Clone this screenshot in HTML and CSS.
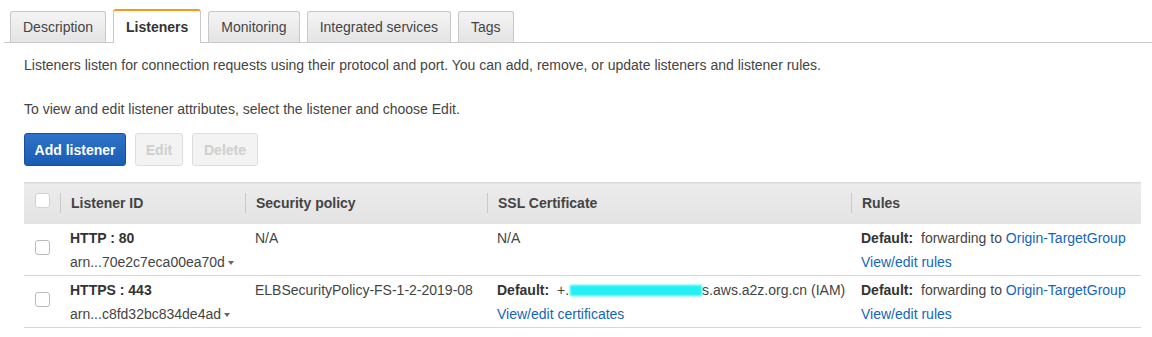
FILE: index.html
```html
<!DOCTYPE html>
<html>
<head>
<meta charset="utf-8">
<link rel="stylesheet" href="styles.css">
</head>
<body>
<div class="tabs">
  <div class="tab">Description</div>
  <div class="tab active">Listeners</div>
  <div class="tab">Monitoring</div>
  <div class="tab">Integrated services</div>
  <div class="tab">Tags</div>
</div>
<div class="content">
  <p class="intro">Listeners listen for connection requests using their protocol and port. You can add, remove, or update listeners and listener rules.</p>
  <p class="hint">To view and edit listener attributes, select the listener and choose Edit.</p>
  <div class="actions">
    <button class="btn primary">Add listener</button>
    <button class="btn disabled">Edit</button>
    <button class="btn disabled">Delete</button>
  </div>
  <table class="grid">
    <colgroup>
      <col class="c-check"><col class="c-id"><col class="c-policy"><col class="c-ssl"><col class="c-rules">
    </colgroup>
    <thead>
      <tr>
        <th class="check"><span class="box"></span></th>
        <th class="sep">Listener ID</th>
        <th class="sep">Security policy</th>
        <th class="sep">SSL Certificate</th>
        <th class="sep">Rules</th>
      </tr>
    </thead>
    <tbody>
      <tr>
        <td class="check"><span class="box"></span></td>
        <td><div class="line strong">HTTP : 80</div><div class="line second">arn...70e2c7eca00ea70d <span class="caret"></span></div></td>
        <td><div class="line">N/A</div></td>
        <td><div class="line">N/A</div></td>
        <td><div class="line"><span class="label">Default:</span> forwarding to <a class="link">Origin-TargetGroup</a></div><div class="line second"><a class="link">View/edit rules</a></div></td>
      </tr>
      <tr>
        <td class="check"><span class="box"></span></td>
        <td><div class="line strong">HTTPS : 443</div><div class="line second">arn...c8fd32bc834de4ad <span class="caret"></span></div></td>
        <td><div class="line">ELBSecurityPolicy-FS-1-2-2019-08</div></td>
        <td><div class="line"><span class="label">Default:</span> +.<span class="redact"></span>s.aws.a2z.org.cn (IAM)</div><div class="line second"><a class="link">View/edit certificates</a></div></td>
        <td><div class="line"><span class="label">Default:</span> forwarding to <a class="link">Origin-TargetGroup</a></div><div class="line second"><a class="link">View/edit rules</a></div></td>
      </tr>
    </tbody>
  </table>
</div>
</body>
</html>
```
FILE: styles.css
```css
* { box-sizing: border-box; }
body {
  margin: 0;
  background: #fff;
  font-family: "Liberation Sans", Arial, Helvetica, sans-serif;
  font-size: 14px;
  color: #444;
}
.tabs {
  display: flex;
  align-items: flex-end;
  gap: 7px;
  margin-left: 4px;
  padding: 9px 0 0 6px;
  border-bottom: 1px solid #c9c9c9;
}
.tab {
  height: 31px;
  padding: 0 12px;
  display: flex;
  align-items: center;
  font-size: 14px;
  color: #444;
  background: linear-gradient(#f4f4f4, #e4e4e4);
  border: 1px solid #c8c8c8;
  border-bottom: none;
  border-radius: 3px 3px 0 0;
}
.tab.active {
  height: 34px;
  margin-bottom: -1px;
  background: #fff;
  border-top: 2px solid #f7981d;
  font-weight: bold;
  color: #333;
}
.content {
  padding: 0 11px 0 24px;
}
p {
  margin: 0;
  line-height: 16px;
}
.intro { margin-top: 14px; }
.hint { margin-top: 28px; }
.actions {
  display: flex;
  gap: 9px;
  margin-top: 16px;
}
.btn {
  height: 33px;
  padding: 0;
  font-family: inherit;
  font-size: 14px;
  font-weight: bold;
  border-radius: 3px;
  border: 1px solid;
}
.btn.primary {
  width: 102px;
  color: #fff;
  background: linear-gradient(#2e73c9, #1b5cb3);
  border-color: #1a4f99;
}
.btn.disabled {
  color: #cfcfcf;
  background: #f3f3f3;
  border-color: #dedede;
}
.btn.disabled:nth-child(2) { width: 48px; }
.btn.disabled:nth-child(3) { width: 66px; }
.grid {
  margin-top: 16px;
  width: 1117px;
  border-collapse: collapse;
  table-layout: fixed;
}
.c-check { width: 36px; }
.c-id { width: 185px; }
.c-policy { width: 242px; }
.c-ssl { width: 364px; }
.c-rules { width: 290px; }
thead tr {
  background: linear-gradient(#ececec, #e3e3e3);
  border-top: 1px solid #dadada;
}
th {
  height: 41px;
  text-align: left;
  font-weight: bold;
  color: #444;
  padding: 0 11px;
  position: relative;
}
th.sep::before {
  content: "";
  position: absolute;
  left: 0;
  top: 10px;
  height: 20px;
  border-left: 1px solid #c9c9c9;
}
th.check, td.check { padding: 0 0 0 11px; }
.box {
  display: block;
  width: 15px;
  height: 15px;
  background: #fff;
  border: 1px solid #b9b9b9;
  border-radius: 3px;
}
th.check .box { border-color: #d2d2d2; margin-top: -6px; }
td.check .box { margin-top: -4px; }
tbody tr { border-bottom: 1px solid #d7d7d7; }
td {
  padding: 6px 11px 5px 10px;
  vertical-align: top;
  white-space: nowrap;
}
td.check { vertical-align: middle; }
.line { line-height: 16px; color: #444; }
.line.second { margin-top: 8px; }
.strong { font-weight: bold; color: #333; }
.label { font-weight: bold; color: #333; margin-right: 4px; }
.link { color: #1466bb; text-decoration: none; }
.caret {
  display: inline-block;
  width: 0;
  height: 0;
  border-left: 3px solid transparent;
  border-right: 3px solid transparent;
  border-top: 4px solid #666;
  vertical-align: middle;
  margin-left: -1px;
}
.redact {
  display: inline-block;
  width: 132px;
  height: 11px;
  background: #22f0f2;
  filter: blur(1.2px);
  vertical-align: -1px;
  margin-left: 1px;
}
```
